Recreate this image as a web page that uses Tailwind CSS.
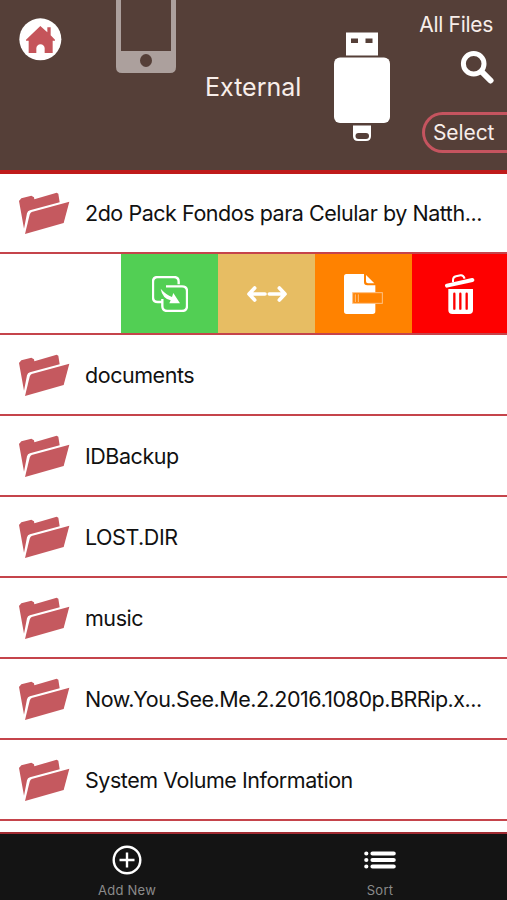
<!DOCTYPE html>
<html lang="en">
<head>
    <meta charset="utf-8">
    <meta name="viewport" content="width=device-width, initial-scale=1">
    <title>External</title>
    <script src="https://cdn.jsdelivr.net/npm/@tailwindcss/browser@4"></script>
</head>
<body class="bg-white font-[Inter,sans-serif] text-[#111]">
<div class="flex flex-col w-[507px] h-[900px] overflow-hidden">

    <header class="flex items-start shrink-0 h-[174px] bg-[#553f38] border-b-4 border-[#bf1a1a] text-[#f8eeea]">
        <svg class="ml-[19px] mt-[18px] w-[43px] h-[43px] shrink-0" viewBox="0 0 129 129">
            <circle cx="64" cy="64" r="63" fill="#fff"/>
            <path fill="#c5545a" d="M64 24L85 43V28H95V52L108 65V68H101V105H77V91A12 12 0 0 0 52 91V105H29V68H21V65Z"/>
        </svg>
        <svg class="ml-[54px] w-[60px] h-[73px] shrink-0" viewBox="0 0 60 73">
            <path fill="#aca09d" fill-rule="evenodd" d="M0 0H5V51H55V0H60V67Q60 73 54 73H6Q0 73 0 67Z"/>
            <ellipse cx="30" cy="60.5" rx="6" ry="6.5" fill="#553f38"/>
        </svg>
        <h1 class="ml-[29px] mt-[71px] w-[96px] shrink-0 text-[25px] leading-8 whitespace-nowrap">External</h1>
        <svg class="ml-[33px] mt-[32px] w-[56px] h-[110px] shrink-0" viewBox="0 0 56 110">
            <path fill="#fff" d="M12 0.5H44V23.5H12Z"/>
            <path fill="#553f38" d="M17 6.500H24V11H17ZM31.500 6.500H38.500V11H31.500Z"/>
            <rect x="0" y="25.500" width="56" height="65.500" rx="6" fill="#fff"/>
            <path fill="#fff" d="M19 93.500H37V104Q37 109 32 109H24Q19 109 19 104Z"/>
            <rect x="21.500" y="101" width="13.500" height="6" rx="3" fill="#553f38"/>
        </svg>
        <div class="flex flex-col items-end grow pt-[9px]">
            <span class="mr-[14px] text-[21px] leading-8 tracking-[-0.3px] whitespace-nowrap">All Files</span>
            <svg class="mr-[13px] mt-[9px] w-[34px] h-[34px]" viewBox="0 0 34 34" fill="none" stroke="#fff" stroke-linecap="round">
                <circle cx="13.700" cy="13.700" r="10.300" stroke-width="5"/>
                <path d="M22 22L30.500 30.500" stroke-width="6"/>
            </svg>
            <div class="mt-[28px] w-[85px] h-[41px] flex items-center pl-[8px] border-3 border-r-0 border-[#c5545f] rounded-l-full text-[21px] tracking-[-0.1px]">Select</div>
        </div>
    </header>

    <main class="grow overflow-hidden">
        <svg class="hidden">
            <symbol id="folder" viewBox="24 30 156 138">
                <path fill="#c5595f" d="M27 63L34 55L64 47L72 52L73 58L140 38L145 41L149 67L60 91Q53 93 51 100L42 146Z"/>
                <path fill="#c5595f" d="M65 96L178 65L161 129L45 162L59 104Q61 98 65 96Z"/>
            </symbol>
        </svg>
        <div class="flex items-center h-20 pl-[18px] border-b-2 border-[#c5444b]">
            <svg class="w-[52px] h-[46px] shrink-0"><use href="#folder"/></svg>
            <span class="ml-[15px] pt-px text-[21.5px] tracking-[-0.46px] whitespace-nowrap">2do Pack Fondos para Celular by Natth...</span>
        </div>

        <!-- swiped row with its actions -->
        <div class="flex justify-end h-[81px] border-b-2 border-[#c5444b]">
            <div class="flex items-center justify-center w-[97px] pt-px bg-[#52cf54]">
                <svg class="w-9 h-9" viewBox="0 0 108 108" fill="none" stroke="#fff" stroke-width="7">
                    <path d="M33 78H17Q3 78 3 64V17Q3 3 17 3H66Q80 3 80 17V25"/>
                    <path d="M42 31H90Q105 31 105 45V90Q105 105 90 105H46Q31 105 31 90V69"/>
                    <path fill="#fff" stroke="none" d="M26 38Q43 57 60 63L64 51L84 82L52 82L56 73Q31 67 26 38Z"/>
                </svg>
            </div>
            <div class="flex items-center justify-center w-[97px] pt-px bg-[#e7bd63]">
                <svg class="w-10 h-[18px]" viewBox="0 0 120 54" fill="none" stroke="#fff" stroke-width="11" stroke-linecap="round" stroke-linejoin="round">
                    <path d="M54 27H6M23 9L6 27L23 45M67 27H114M97 9L114 27L97 45"/>
                </svg>
            </div>
            <div class="flex items-center justify-center w-[97px] pt-px bg-[#ff8200]">
                <svg class="w-[39px] h-[40px]" viewBox="0 0 117 120">
                    <path fill="#fff" d="M7 0H60V24Q60 34 70 34H94V112Q94 120 86 120H8Q0 120 0 112V8Q0 0 7 0ZM66 3L91 28H72Q66 28 66 22Z"/>
                    <rect x="26" y="56" width="89" height="32" fill="#ff8200" stroke="#ffc386" stroke-width="3"/>
                    <path d="M34 61V84M43 61V84" stroke="#ffc386" stroke-width="3"/>
                </svg>
            </div>
            <div class="flex items-center justify-center w-[95px] pt-px bg-[#fe0000]">
                <svg class="w-[30px] h-10" viewBox="0 0 90 120">
                    <path fill="#fff" d="M10 45H84V108Q84 120 72 120H22Q10 120 10 108Z"/>
                    <path d="M28 59V104M46 59V104M65 59V104" stroke="#fe0000" stroke-width="7" stroke-linecap="round"/>
                    <path d="M6 35L82 18" stroke="#fff" stroke-width="12" stroke-linecap="round"/>
                    <path d="M24 25V18Q24 9 33 7L47 4Q55 3 59 14" fill="none" stroke="#fff" stroke-width="6"/>
                </svg>
            </div>
        </div>

        <div class="flex items-center h-[81px] pl-[18px] border-b-2 border-[#c5444b]">
            <svg class="w-[52px] h-[46px] shrink-0"><use href="#folder"/></svg>
            <span class="ml-[15px] pt-0.5 text-[21.5px] tracking-[-0.46px] whitespace-nowrap">documents</span>
        </div>
        <div class="flex items-center h-[81px] pl-[18px] border-b-2 border-[#c5444b]">
            <svg class="w-[52px] h-[46px] shrink-0"><use href="#folder"/></svg>
            <span class="ml-[15px] pt-0.5 text-[21.5px] tracking-[-0.46px] whitespace-nowrap">IDBackup</span>
        </div>
        <div class="flex items-center h-[81px] pl-[18px] border-b-2 border-[#c5444b]">
            <svg class="w-[52px] h-[46px] shrink-0"><use href="#folder"/></svg>
            <span class="ml-[15px] pt-0.5 text-[21.5px] tracking-[-0.46px] whitespace-nowrap">LOST.DIR</span>
        </div>
        <div class="flex items-center h-[81px] pl-[18px] border-b-2 border-[#c5444b]">
            <svg class="w-[52px] h-[46px] shrink-0"><use href="#folder"/></svg>
            <span class="ml-[15px] pt-0.5 text-[21.5px] tracking-[-0.46px] whitespace-nowrap">music</span>
        </div>
        <div class="flex items-center h-[81px] pl-[18px] border-b-2 border-[#c5444b]">
            <svg class="w-[52px] h-[46px] shrink-0"><use href="#folder"/></svg>
            <span class="ml-[15px] pt-0.5 text-[21.5px] tracking-[-0.48px] whitespace-nowrap">Now.You.See.Me.2.2016.1080p.BRRip.x...</span>
        </div>
        <div class="flex items-center h-[81px] pl-[18px] border-b-2 border-[#c5444b]">
            <svg class="w-[52px] h-[46px] shrink-0"><use href="#folder"/></svg>
            <span class="ml-[15px] pt-0.5 text-[21.5px] tracking-[-0.46px] whitespace-nowrap">System Volume Information</span>
        </div>
    </main>

    <nav class="flex shrink-0 h-[68px] bg-[#141414] border-t-2 border-[#a02b32] text-[#8b8b8b] text-[13px] leading-4 tracking-[0.25px]">
        <div class="flex flex-col items-center w-[254px] pt-[11px]">
            <svg class="w-[30px] h-[30px]" viewBox="0 0 30 30" fill="none" stroke="#fff" stroke-width="2.400">
                <circle cx="15" cy="15" r="13.300"/>
                <path d="M15 7.500V22.500M7.500 15H22.500"/>
            </svg>
            <span class="mt-[7px]">Add New</span>
        </div>
        <div class="flex flex-col items-center grow pr-px pt-[11px]">
            <svg class="w-8 h-[30px]" viewBox="0 0 32 30" stroke="#fff" stroke-width="4.200" stroke-linecap="round">
                <path d="M2.300 8.500H2.310M2.300 15H2.310M2.300 21.500H2.310M8.500 8.500H29.700M8.500 15H29.700M8.500 21.500H29.700"/>
            </svg>
            <span class="mt-[7px]">Sort</span>
        </div>
    </nav>
</div>
</body>
</html>
